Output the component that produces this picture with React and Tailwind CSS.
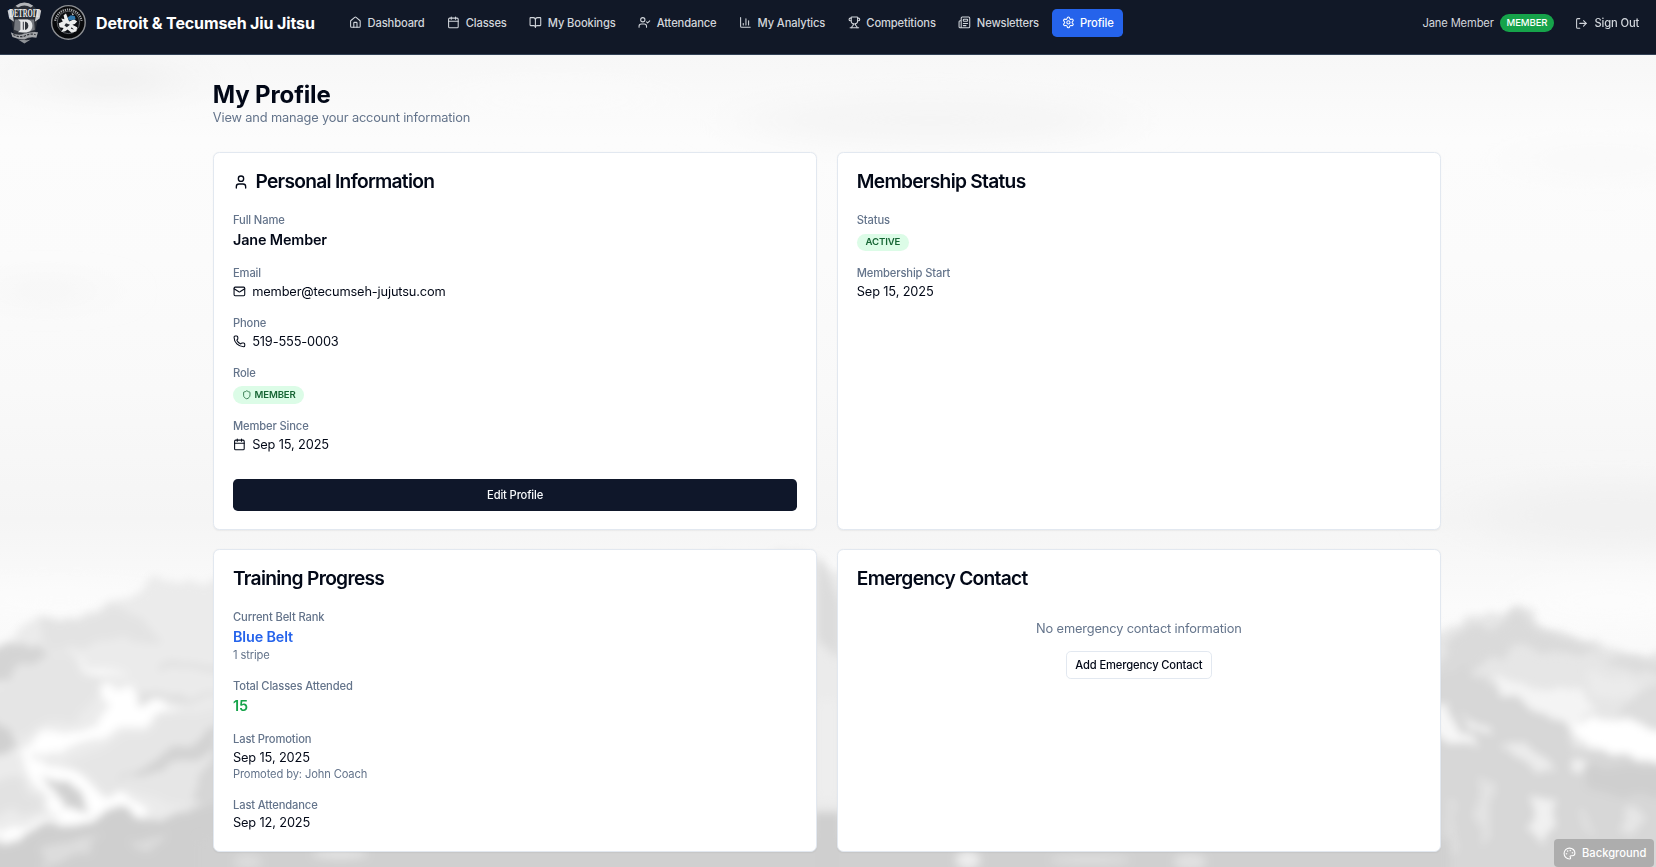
import React from "react";
import {
  House, Calendar, BookOpen, UserCheck, ChartColumn, Trophy, Newspaper, Settings,
  LogOut, User, Mail, Phone, Shield, Palette,
} from "lucide-react";

const nav = [
  { icon: House, label: "Dashboard" },
  { icon: Calendar, label: "Classes" },
  { icon: BookOpen, label: "My Bookings" },
  { icon: UserCheck, label: "Attendance" },
  { icon: ChartColumn, label: "My Analytics" },
  { icon: Trophy, label: "Competitions" },
  { icon: Newspaper, label: "Newsletters" },
  { icon: Settings, label: "Profile", active: true },
];

function Mountains() {
  return (
    <svg className="fixed inset-0 h-full w-full" viewBox="0 0 1656 867" preserveAspectRatio="none" aria-hidden="true">
      <defs>
        <linearGradient id="sky" x1="0" y1="0" x2="0" y2="1">
          <stop offset="0.06" stopColor="#f7f7f7" />
          <stop offset="0.16" stopColor="#fcfcfc" />
          <stop offset="0.3" stopColor="#fbfbfb" />
          <stop offset="0.45" stopColor="#f9f9f9" />
          <stop offset="0.6" stopColor="#f5f5f5" />
          <stop offset="0.7" stopColor="#fbfbfb" />
          <stop offset="1" stopColor="#f4f4f4" />
        </linearGradient>
        <filter id="ridge" x="-5%" y="-10%" width="110%" height="120%">
          <feTurbulence type="fractalNoise" baseFrequency="0.03" numOctaves="3" seed="7" result="n" />
          <feDisplacementMap in="SourceGraphic" in2="n" scale="26" xChannelSelector="R" yChannelSelector="G" />
          <feGaussianBlur stdDeviation="4.5" />
        </filter>
        <filter id="soft" x="-20%" y="-20%" width="140%" height="140%"><feGaussianBlur stdDeviation="5" /></filter>
        <filter id="cloud" x="-50%" y="-150%" width="200%" height="400%"><feGaussianBlur stdDeviation="34 14" /></filter>
      </defs>
      <rect width="1656" height="867" fill="url(#sky)" />
      <g filter="url(#cloud)">
        <ellipse cx="110" cy="80" rx="70" ry="12" fill="#ececec" />
        <ellipse cx="45" cy="291" rx="40" ry="9" fill="#f0f0f0" />
        <ellipse cx="930" cy="120" rx="190" ry="26" fill="#f5f5f5" />
        <ellipse cx="560" cy="100" rx="120" ry="14" fill="#fbfbfb" />
        <ellipse cx="1600" cy="160" rx="90" ry="18" fill="#f9f9f9" />
        <ellipse cx="1610" cy="515" rx="140" ry="32" fill="#f1f1f1" />
        <ellipse cx="60" cy="600" rx="110" ry="14" fill="#fcfcfc" />
        <ellipse cx="1610" cy="600" rx="90" ry="22" fill="#fcfcfc" />
      </g>
      <g filter="url(#ridge)">
        <path d="M-20 645L20 636L37 613L60 622L100 607L132 598L150 586L180 580L206 584L230 570L500 600L700 560L780 550L800 552L822 560L840 580L870 600V900H-20Z" fill="#ebebeb" />
        <path d="M860 900V620L1000 640L1300 660L1441 630L1458 624L1475 612L1500 612L1516 602L1532 612L1540 622L1568 634L1590 646L1656 656L1690 660V900Z" fill="#e6e6e6" />
        <path d="M-20 642L20 640L36 642L44 655L30 674L-20 686Z" fill="#d4d4d4" />
        <path d="M36 616L60 624L130 606L150 628L160 644L110 640L76 648L44 650Z" fill="#e3e3e3" />
        <path d="M40 655L70 652L100 680L90 715L0 740L-20 700Z" fill="#e5e5e5" />
        <path d="M160 660L220 665V672L160 668ZM130 694L220 694V700L150 700Z" fill="#dedede" />
        <path d="M95 688L140 696L180 712L120 728L60 752L15 752L30 738L100 728L110 708Z" fill="#ffffff" />
        <path d="M72 652L92 664L125 682L95 676Z" fill="#fcfcfc" />
        <path d="M-20 720L10 732L18 746L-20 762Z" fill="#d0d0d0" />
        <path d="M15 750L60 766L110 790L150 810L90 826L0 836L-20 836L60 816L30 782Z" fill="#ffffff" />
        <path d="M36 778L60 784L92 806L70 806Z" fill="#d0d0d0" />
        <path d="M-20 775L20 780L44 808L-20 824Z" fill="#e2e2e2" />
        <path d="M60 765L120 740L170 716L230 714V800L190 812L140 790L110 802Z" fill="#e6e6e6" />
        <path d="M120 784L160 752L220 728L220 744L160 770Z" fill="#d2d2d2" />
        <path d="M190 800L220 740L235 740V820Z" fill="#d6d6d6" />
        <path d="M-20 842L50 826L80 824L110 808L140 816L190 812L240 800V890H-20Z" fill="#cfcfcf" />
        <path d="M40 850L100 836L90 852L40 867ZM130 840L170 834L150 856Z" fill="#dddddd" />
      </g>
      <g filter="url(#ridge)">
        <path d="M1441 640L1475 622L1500 626L1516 606L1532 624L1568 640L1600 655L1570 658L1520 650L1480 665L1436 690Z" fill="#dadada" />
        <path d="M1600 655L1690 664V680L1620 668Z" fill="#dcdcdc" />
        <path d="M1425 680L1470 664L1500 692L1560 712L1580 748L1640 752L1690 760V890H1425Z" fill="#d7d7d7" />
        <path d="M1490 676L1530 688L1580 694L1600 716L1570 722L1500 696Z" fill="#f4f4f4" />
        <path d="M1590 672L1640 680L1630 700L1590 696Z" fill="#ebebeb" />
        <path d="M1640 690L1690 676V735L1610 722Z" fill="#dddddd" />
        <path d="M1564 718L1600 724L1690 736V762L1610 754L1590 738Z" fill="#ffffff" />
        <path d="M1432 704L1450 704L1460 726L1480 752L1450 746L1432 730Z" fill="#f7f7f7" />
        <path d="M1464 716L1488 728L1492 736L1468 728Z" fill="#f5f5f5" />
        <path d="M1500 746L1530 744L1556 772L1520 766Z" fill="#ececec" />
        <path d="M1574 756L1590 764L1584 776L1572 772Z" fill="#f2f2f2" />
        <path d="M1586 768L1690 762V792H1590Z" fill="#cfcfcf" />
        <path d="M1530 796L1552 796L1554 830L1542 850L1530 826Z" fill="#f1f1f1" />
        <path d="M1476 770L1494 780L1488 840L1478 850Z" fill="#e3e3e3" />
        <path d="M1445 800L1456 806L1460 850L1448 840ZM1582 810L1594 812L1596 836L1584 832Z" fill="#dfdfdf" />
        <path d="M1626 806L1644 816L1634 836L1614 830Z" fill="#e6e6e6" />
      </g>
      <g filter="url(#soft)">
        <path d="M817 556L826 568L840 604V660L817 640Z" fill="#dcdcdc" />
        <path d="M817 700H838V800H817Z" fill="#eeeeee" />
        <path d="M200 838H1450V900H200Z" fill="#d0d0d0" />
        <path d="M812 812H842V870H812Z" fill="#cfcfcf" />
        <ellipse cx="340" cy="854" rx="28" ry="5" fill="#e4e4e4" />
        <ellipse cx="248" cy="862" rx="14" ry="8" fill="#dcdcdc" />
        <ellipse cx="968" cy="860" rx="12" ry="9" fill="#eeeeee" />
        <ellipse cx="1090" cy="860" rx="40" ry="5" fill="#dedede" />
        <ellipse cx="1190" cy="862" rx="16" ry="8" fill="#e2e2e2" />
      </g>
    </svg>
  );
}

function DetroitLogo() {
  return (
    <svg className="h-[54px] w-[46px] overflow-visible" viewBox="0 0 46 54" aria-hidden="true">
      <path d="M4 15Q12 3 23 2Q34 3 42 15L39 26L36 42L23 52L10 42L7 26Z" fill="#2a2e36" />
      <path d="M12 6Q23-2 34 6L31 8Q23 3 15 8Z" fill="#b4b6ba" />
      <path d="M2 12L7 10L10 26L4 22ZM44 12L39 10L36 26L42 22Z" fill="#c9cbce" />
      <text x="23" y="20" textAnchor="middle" textLength="38" lengthAdjust="spacingAndGlyphs" fontFamily="Liberation Serif, serif" fontWeight="700" fontSize="16" fill="#e8e9ea">DETROIT</text>
      <path d="M11 23H35L36 36L23 41L10 36Z" fill="#74777d" />
      <path d="M15 23H27Q33 24 33 31Q33 38 26 39H15L18 36V26Z" fill="#e5e6e8" />
      <path d="M21 26H25Q28 27 28 31Q28 35 25 36H21Z" fill="#30343b" />
      <path d="M23 24V38" stroke="#e5e6e8" strokeWidth="1.5" />
      <path d="M6 39Q14 44 23 41Q32 38 40 39L38 46Q30 44 23 48Q14 48 8 45Z" fill="#a5a7ab" />
      <path d="M9 42Q16 46 23 44Q30 40 37 42" stroke="#34373d" strokeWidth="1.5" strokeDasharray="3 1.5" fill="none" />
      <path d="M15 48L23 53L31 48L26 49Z" fill="#8f9297" />
    </svg>
  );
}

function TecumsehLogo() {
  return (
    <svg className="h-[46px] w-[46px]" viewBox="0 0 46 46" aria-hidden="true">
      <circle cx="23" cy="23" r="21" fill="#08090b" stroke="#8d8f93" strokeWidth="1.8" />
      <path d="M6.500 21A16.700 16.700 0 0 1 39.500 21" fill="none" stroke="#a3a5a9" strokeWidth="2.600" strokeDasharray="1.600 1.100" />
      <circle cx="23" cy="23" r="14" fill="#0d0f13" stroke="#74777c" strokeWidth="1" />
      <path d="M17 14L20 12L22 17L24 22L30 19L34 22L31 25L28 26L34 29L33 34L27 36L22 32L19 34L14 35L17 30L12 29L11 24L16 22L14 18L18 19Z" fill="#eceded" />
      <path d="M22 17L26 14L31 15L32 19L27 20L24 21Z" fill="#2f77ae" />
      <path d="M20 24L25 26L21 29L18 27ZM27 29L30 32L26 31Z" fill="#24282e" />
      <path d="M27 11L30 13L28 14Z" fill="#d2d3d5" />
    </svg>
  );
}

function Card({ title, icon: Icon, children }) {
  return (
    <section className="rounded-lg border border-[#e2e8f0] bg-white shadow-[0_1px_2px_rgba(0,0,0,0.05)]">
      <div className="px-6 pt-6 pb-[25px]">
        <h2 className="flex h-6 items-center gap-2 text-2xl leading-none font-semibold tracking-[-0.037em]">
          {Icon && <Icon className="h-5 w-5" />}
          {title}
        </h2>
      </div>
      <div className="flex flex-col gap-4 px-6 pb-[23px]">{children}</div>
    </section>
  );
}

function Field({ label, snug, children }) {
  return (
    <div>
      <div className={snug
        ? "h-[22.25px] text-sm leading-[22px] font-medium text-[#64748b]"
        : "h-[22.25px] text-sm leading-6 font-medium text-[#64748b]"}>{label}</div>
      {children}
    </div>
  );
}

function Pill({ children }) {
  return (
    <div className="flex h-7 items-center pt-[5px]">
      <span className="flex h-[22px] items-center gap-1 rounded-full bg-[#dcfce7] px-[11px] text-xs font-semibold text-[#166534]">{children}</span>
    </div>
  );
}

export default function App() {
  return (
    <div className="relative h-[867px] overflow-hidden bg-white font-[Inter,sans-serif] text-[#020817]">
      <Mountains />
      <div className="relative tracking-[-0.011em] [zoom:0.8]">
        <header className="h-[69px] border-b border-[#334155] bg-[#111827]">
          <div className="flex h-[57px] items-center px-2">
            <div className="flex items-center gap-3">
              <div className="flex items-center gap-2">
                <DetroitLogo />
                <TecumsehLogo />
              </div>
              <span className="w-[276px] text-xl font-bold tracking-[-0.008em] whitespace-nowrap text-white">Detroit &amp; Tecumseh Jiu Jitsu</span>
            </div>
            <nav className="ml-[29px] flex items-center gap-[5.4px]">
              {nav.map(({ icon: Icon, label, active }) => (
                <a key={label} className={active
                  ? "flex h-[35px] items-center gap-[7px] rounded-md bg-[#2563eb] px-[11.5px] text-sm font-medium whitespace-nowrap text-white"
                  : "flex h-[35px] items-center gap-[7px] rounded-md px-[11.5px] text-sm font-medium whitespace-nowrap text-[#d1d5db]"}>
                  <Icon className="h-4 w-4" />
                  {label}
                </a>
              ))}
            </nav>
            <div className="ml-auto flex items-center pt-px">
              <span className="text-sm text-[#d1d5db]">Jane Member</span>
              <span className="ml-2 flex h-[22px] items-center rounded-full bg-[#16a34a] px-2 pt-px text-xs font-medium text-white">MEMBER</span>
              <button className="ml-[27px] flex items-center gap-2 pr-[13px] text-sm font-medium whitespace-nowrap text-[#d1d5db]">
                <LogOut className="h-4 w-4" />
                Sign Out
              </button>
            </div>
          </div>
        </header>

        <main className="ml-[266px] w-[1535.5px] pt-[32.5px]">
          <h1 className="text-3xl leading-9 font-bold">My Profile</h1>
          <p className="-mt-0.5 text-base text-[#64748b]">View and manage your account information</p>

          <div className="mt-[30.5px] grid grid-cols-2 gap-6">
            <Card title="Personal Information" icon={User}>
              <Field label="Full Name"><p className="text-lg font-semibold">Jane Member</p></Field>
              <Field label="Email"><p className="flex items-center gap-2"><Mail className="h-4 w-4" />member@tecumseh-jujutsu.com</p></Field>
              <Field label="Phone"><p className="flex items-center gap-2"><Phone className="h-4 w-4" />519-555-0003</p></Field>
              <Field label="Role"><Pill><Shield className="h-3 w-3" />MEMBER</Pill></Field>
              <Field label="Member Since"><p className="flex items-center gap-2"><Calendar className="h-4 w-4" />Sep 15, 2025</p></Field>
              <button className="mt-[15px] h-10 rounded-md bg-[#0f172a] text-sm font-medium text-[#f8fafc]">Edit Profile</button>
            </Card>

            <Card title="Membership Status">
              <Field label="Status"><Pill>ACTIVE</Pill></Field>
              <Field label="Membership Start"><p>Sep 15, 2025</p></Field>
            </Card>

            <Card title="Training Progress">
              <Field snug label="Current Belt Rank">
                <p className="text-lg font-semibold text-[#2563eb]">Blue Belt</p>
                <p className="-mt-0.5 mb-0.5 text-sm text-[#64748b]">1 stripe</p>
              </Field>
              <Field snug label="Total Classes Attended"><p className="text-lg font-semibold text-[#16a34a]">15</p></Field>
              <Field snug label="Last Promotion">
                <p>Sep 15, 2025</p>
                <p className="-mt-0.5 mb-0.5 text-sm text-[#64748b]">Promoted by: John Coach</p>
              </Field>
              <Field label="Last Attendance"><p className="-mt-px">Sep 12, 2025</p></Field>
            </Card>

            <Card title="Emergency Contact">
              <div className="flex flex-col items-center pt-[13.5px]">
                <p className="text-[#64748b]">No emergency contact information</p>
                <button className="mt-[15px] h-9 rounded-md border border-[#e2e8f0] bg-white px-[11px] text-sm font-medium">Add Emergency Contact</button>
              </div>
            </Card>
          </div>
        </main>
      </div>

      <button className="absolute right-[2px] bottom-0 flex h-7 w-[100px] items-center gap-[6px] rounded bg-[#adadad] pl-[9px] text-[11.2px] font-medium text-white">
        <Palette className="h-[13px] w-[13px]" />
        Background
      </button>
    </div>
  );
}
